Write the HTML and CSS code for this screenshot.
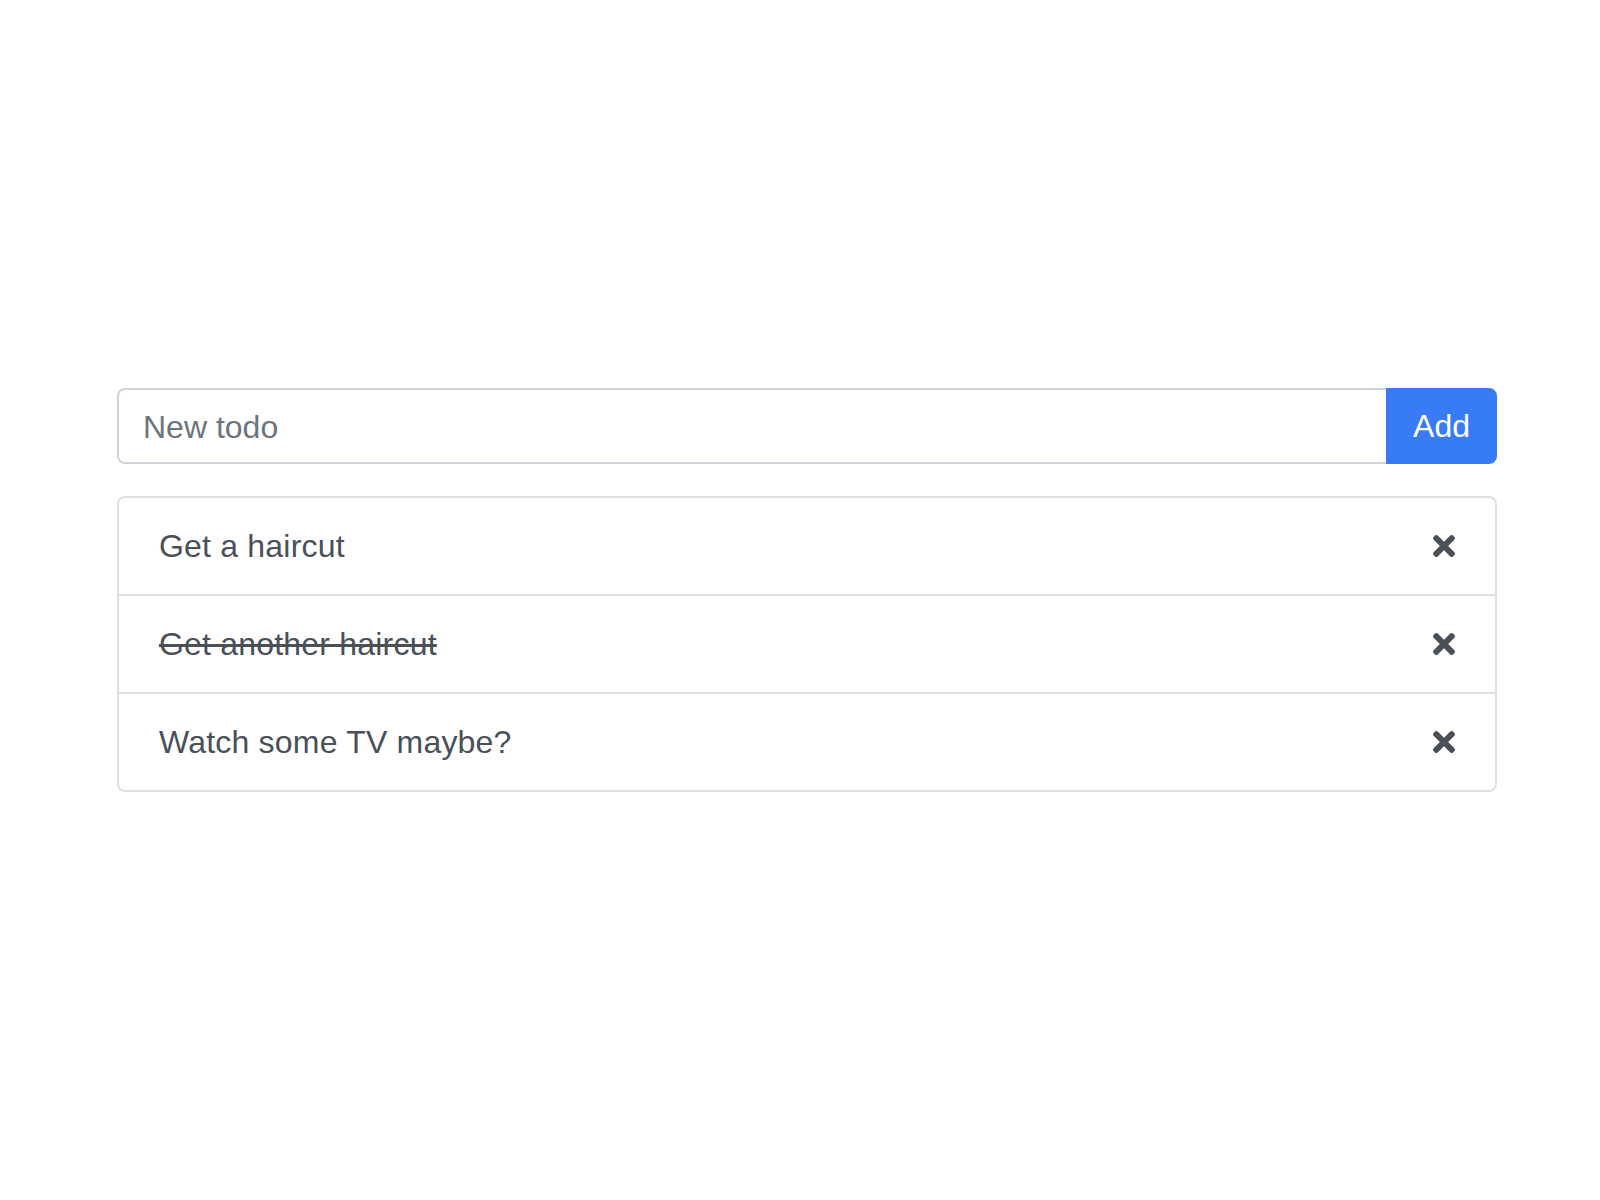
FILE: index.html
```html
<!DOCTYPE html>
<html>
<head>
<meta charset="utf-8">
<link rel="stylesheet" href="styles.css">
</head>
<body>
<div class="app">
  <form class="input-group">
    <input class="todo-input" type="text" placeholder="New todo">
    <button class="add-btn" type="button">Add</button>
  </form>
  <ul class="todo-list">
    <li class="todo-item"><span class="todo-text">Get a haircut</span><span class="remove"><svg viewBox="0 0 352 512" class="x-icon"><path d="M242.72 256l100.07-100.070c12.28-12.28 12.28-32.19 0-44.48l-22.24-22.24c-12.28-12.28-32.19-12.28-44.48 0L176 189.28 75.93 89.21c-12.28-12.28-32.19-12.28-44.48 0L9.21 111.45c-12.28 12.28-12.28 32.19 0 44.48L109.28 256 9.21 356.07c-12.28 12.28-12.28 32.19 0 44.48l22.24 22.24c12.28 12.28 32.2 12.28 44.48 0L176 322.72l100.07 100.07c12.28 12.28 32.2 12.28 44.48 0l22.24-22.240c12.28-12.28 12.28-32.19 0-44.48L242.72 256z"/></svg></span></li>
    <li class="todo-item"><span class="todo-text done">Get another haircut</span><span class="remove"><svg viewBox="0 0 352 512" class="x-icon"><path d="M242.72 256l100.07-100.070c12.28-12.28 12.28-32.19 0-44.48l-22.24-22.24c-12.28-12.28-32.19-12.28-44.48 0L176 189.28 75.93 89.21c-12.28-12.28-32.19-12.28-44.48 0L9.21 111.45c-12.28 12.28-12.28 32.19 0 44.48L109.28 256 9.21 356.07c-12.28 12.28-12.28 32.19 0 44.48l22.24 22.24c12.28 12.28 32.2 12.28 44.48 0L176 322.72l100.07 100.07c12.28 12.28 32.2 12.28 44.48 0l22.24-22.240c12.28-12.28 12.28-32.19 0-44.48L242.72 256z"/></svg></span></li>
    <li class="todo-item"><span class="todo-text">Watch some TV maybe?</span><span class="remove"><svg viewBox="0 0 352 512" class="x-icon"><path d="M242.72 256l100.07-100.070c12.28-12.28 12.28-32.19 0-44.48l-22.24-22.24c-12.28-12.28-32.19-12.28-44.48 0L176 189.28 75.93 89.21c-12.28-12.28-32.19-12.28-44.48 0L9.21 111.45c-12.28 12.28-12.28 32.19 0 44.48L109.28 256 9.21 356.07c-12.28 12.28-12.28 32.19 0 44.48l22.24 22.24c12.28 12.28 32.2 12.28 44.48 0L176 322.72l100.07 100.07c12.28 12.28 32.2 12.28 44.48 0l22.24-22.240c12.28-12.28 12.28-32.19 0-44.48L242.72 256z"/></svg></span></li>
  </ul>
</div>
</body>
</html>
```

FILE: styles.css
```css
html, body {
  margin: 0;
  background: #ffffff;
}

body {
  font-family: "Liberation Sans", Arial, Helvetica, sans-serif;
  color: #495057;
}

.app {
  padding: 388px 103px 0 117px;
}

.input-group {
  display: flex;
  margin: 0;
}

.todo-input {
  flex: 1;
  height: 76px;
  box-sizing: border-box;
  border: 2px solid #ced4da;
  border-right: none;
  border-radius: 8px 0 0 8px;
  padding: 2px 24px 0 24px;
  font-family: inherit;
  font-size: 32px;
  color: #495057;
  outline: none;
  background: #fff;
}

.todo-input::placeholder {
  color: #6c757d;
  opacity: 1;
}

.add-btn {
  height: 76px;
  box-sizing: border-box;
  border: 2px solid #377cf6;
  background: #377cf6;
  color: #ffffff;
  font-family: inherit;
  font-size: 32px;
  padding: 0 25px;
  border-radius: 0 8px 8px 0;
}

.todo-list {
  list-style: none;
  margin: 32px 0 0 0;
  padding: 0;
  border: 2px solid #dfdfdf;
  border-radius: 8px;
}

.todo-item {
  display: flex;
  align-items: center;
  justify-content: space-between;
  padding: 24px 40px;
  font-size: 32px;
  line-height: 48px;
  border-top: 2px solid #dfdfdf;
}

.todo-item:first-child {
  border-top: none;
}

.todo-text {
  letter-spacing: 0.2px;
}

.todo-text.done {
  text-decoration: line-through;
}

.remove {
  display: flex;
  align-items: center;
}

.x-icon {
  width: 22px;
  height: 32px;
  fill: #495057;
}
```
